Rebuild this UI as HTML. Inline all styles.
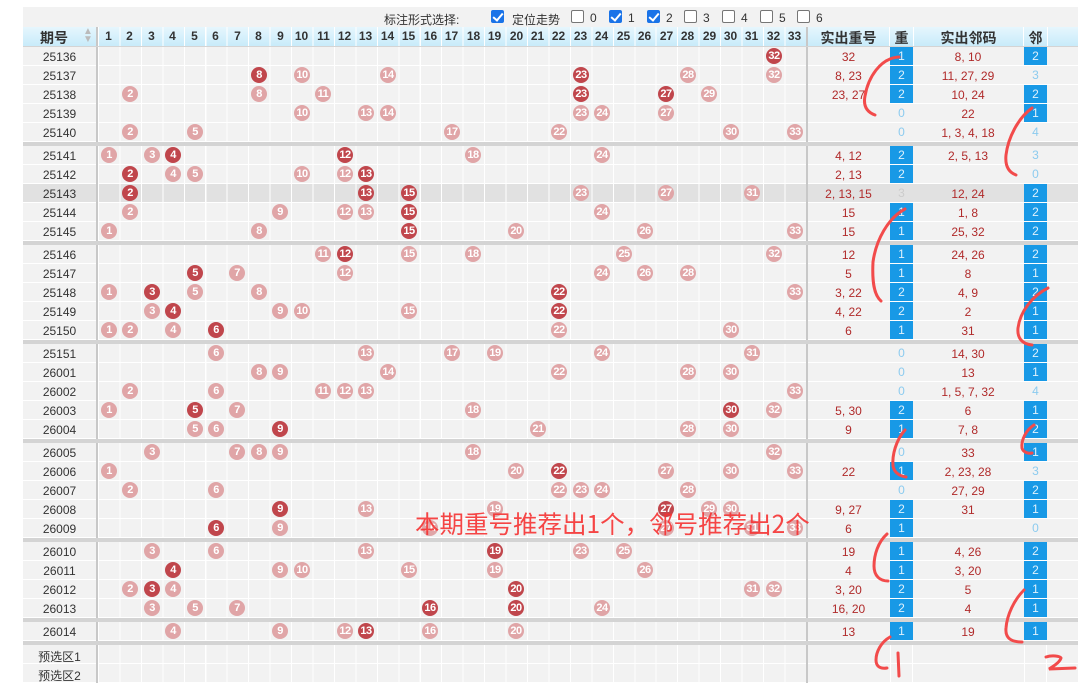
<!DOCTYPE html>
<html><head><meta charset="utf-8">
<style>
*{margin:0;padding:0;box-sizing:border-box}
body{width:1078px;height:679px;overflow:hidden;background:#fff;font-family:"Liberation Sans","Noto Sans CJK SC",sans-serif;position:relative}
#w{position:absolute;left:23px;top:7px;width:1055px;height:672px;background:#d4d4d4}
.bar{position:absolute;left:23px;top:7px;width:1055px;height:20px;background:#f2f2f2;font-size:12px;color:#333}
.bar span{position:absolute;top:4px}
.cb{position:absolute;top:3px;width:13px;height:13px;border:1px solid #767676;border-radius:2px;background:#fff}
.cb.k{background:#1a73e8;border-color:#1a73e8}
.cb.k:after{content:"";position:absolute;left:3px;top:0px;width:4px;height:8px;border:solid #fff;border-width:0 2px 2px 0;transform:rotate(40deg)}
.hd{position:absolute;top:27px;left:23px;width:1055px;height:19px;background:linear-gradient(#e6f6fd,#c8ebfa);font-weight:bold;color:#333}
.hd span{position:absolute;top:2px;text-align:center;font-size:12px}
.hd .big{font-size:14px;top:1px}
.r{position:absolute;left:23px;width:1055px;height:19px;background:#f2f2f2;border-bottom:1px solid #fff}
.r.g{background:#e1e1e1}
.r i{position:absolute;left:0;width:73px;top:3px;text-align:center;font-style:normal;font-size:12px;color:#333}
.num{position:absolute;left:75px;width:708px;top:0;height:18px;background:repeating-linear-gradient(90deg,#fff 0 1px,transparent 1px 21.45px)}
.lsep{position:absolute;left:73px;top:0;width:2px;height:19px;background:#c8c8c8}
.rsep{position:absolute;left:783px;top:0;width:2px;height:19px;background:#c8c8c8}
.r b{position:absolute;top:1px;width:16px;height:16px;border-radius:50%;background:#e0a5a7;color:#fff;font-size:11px;font-weight:bold;text-align:center;line-height:16px;letter-spacing:-0.5px}
.r b.d{background:#c0464c}
.r s{position:absolute;top:3px;text-decoration:none;text-align:center;font-size:12px;color:#b02a2a}
.r s.a{left:785px;width:81px}.r s.b{left:890px;width:110px}
.r u{position:absolute;top:0;height:18px;width:23px;text-decoration:none;text-align:center;font-size:12px;line-height:18px;color:#8ccbef}
.r u.c{left:867px}.r u.e{left:1001px}
.r u.on{background:#1899e6;color:#dff1fc}
.n1{left:78px}.n2{left:99px}.n3{left:121px}.n4{left:142px}.n5{left:164px}.n6{left:185px}.n7{left:206px}.n8{left:228px}.n9{left:249px}.n10{left:271px}.n11{left:292px}.n12{left:314px}.n13{left:335px}.n14{left:357px}.n15{left:378px}.n16{left:399px}.n17{left:421px}.n18{left:442px}.n19{left:464px}.n20{left:485px}.n21{left:507px}.n22{left:528px}.n23{left:550px}.n24{left:571px}.n25{left:593px}.n26{left:614px}.n27{left:635px}.n28{left:657px}.n29{left:678px}.n30{left:700px}.n31{left:721px}.n32{left:743px}.n33{left:764px}
.note{position:absolute;left:415px;top:506px;font-size:24.5px;color:rgba(245,50,50,0.9);white-space:nowrap;font-family:"Noto Sans CJK SC","WenQuanYi Zen Hei",sans-serif}
svg{position:absolute;left:0;top:0}
</style></head><body>
<div id="w"></div>
<div class="bar">
<span style="left:361px">标注形式选择:</span>
<div class="cb k" style="left:468px"></div><span style="left:489px">定位走势</span>
<div class="cb" style="left:548px"></div><span style="left:567px">0</span>
<div class="cb k" style="left:586px"></div><span style="left:605px">1</span>
<div class="cb k" style="left:624px"></div><span style="left:643px">2</span>
<div class="cb" style="left:661px"></div><span style="left:680px">3</span>
<div class="cb" style="left:699px"></div><span style="left:718px">4</span>
<div class="cb" style="left:737px"></div><span style="left:756px">5</span>
<div class="cb" style="left:774px"></div><span style="left:793px">6</span>
</div>
<div class="hd">
<span class="big" style="left:0;width:62px">期号</span><span style="left:60px;top:1px;color:#bbb;font-size:10px;line-height:8px">▲<br>▼</span>
<div style="position:absolute;left:73px;top:0;width:2px;height:19px;background:#c8c8c8"></div>
<div style="position:absolute;left:75px;width:708px;height:19px;background:repeating-linear-gradient(90deg,#fff 0 1px,transparent 1px 21.45px)"></div>
<span style="left:75px;width:21px">1</span><span style="left:96px;width:21px">2</span><span style="left:118px;width:21px">3</span><span style="left:139px;width:21px">4</span><span style="left:161px;width:21px">5</span><span style="left:182px;width:21px">6</span><span style="left:204px;width:21px">7</span><span style="left:225px;width:21px">8</span><span style="left:247px;width:21px">9</span><span style="left:268px;width:21px">10</span><span style="left:290px;width:21px">11</span><span style="left:311px;width:21px">12</span><span style="left:332px;width:21px">13</span><span style="left:354px;width:21px">14</span><span style="left:375px;width:21px">15</span><span style="left:397px;width:21px">16</span><span style="left:418px;width:21px">17</span><span style="left:440px;width:21px">18</span><span style="left:461px;width:21px">19</span><span style="left:483px;width:21px">20</span><span style="left:504px;width:21px">21</span><span style="left:525px;width:21px">22</span><span style="left:547px;width:21px">23</span><span style="left:568px;width:21px">24</span><span style="left:590px;width:21px">25</span><span style="left:611px;width:21px">26</span><span style="left:633px;width:21px">27</span><span style="left:654px;width:21px">28</span><span style="left:676px;width:21px">29</span><span style="left:697px;width:21px">30</span><span style="left:718px;width:21px">31</span><span style="left:740px;width:21px">32</span><span style="left:761px;width:21px">33</span>
<div style="position:absolute;left:783px;top:0;width:2px;height:19px;background:#c8c8c8"></div>
<span class="big" style="left:785px;width:81px">实出重号</span>
<span class="big" style="left:866px;width:24px;border-left:1px solid #fff;height:19px;top:0;padding-top:1px">重</span>
<span class="big" style="left:890px;width:110px;border-left:1px solid #fff;height:19px;top:0;padding-top:1px">实出邻码</span>
<span class="big" style="left:1000px;width:24px;border-left:1px solid #fff;height:19px;top:0;padding-top:1px">邻</span>
<span style="left:1024px;width:31px;border-left:1px solid #fff;height:19px;top:0"></span>
</div>

<div class="r" style="top:47px"><div class="lsep"></div><div class="num"></div><div class="rsep"></div><i>25136</i><b class="n32 d">32</b><s class="a">32</s><u class="c on">1</u><s class="b">8, 10</s><u class="e on">2</u></div>
<div class="r" style="top:66px"><div class="lsep"></div><div class="num"></div><div class="rsep"></div><i>25137</i><b class="n8 d">8</b><b class="n10">10</b><b class="n14">14</b><b class="n23 d">23</b><b class="n28">28</b><b class="n32">32</b><s class="a">8, 23</s><u class="c on">2</u><s class="b">11, 27, 29</s><u class="e">3</u></div>
<div class="r" style="top:85px"><div class="lsep"></div><div class="num"></div><div class="rsep"></div><i>25138</i><b class="n2">2</b><b class="n8">8</b><b class="n11">11</b><b class="n23 d">23</b><b class="n27 d">27</b><b class="n29">29</b><s class="a">23, 27</s><u class="c on">2</u><s class="b">10, 24</s><u class="e on">2</u></div>
<div class="r" style="top:104px"><div class="lsep"></div><div class="num"></div><div class="rsep"></div><i>25139</i><b class="n10">10</b><b class="n13">13</b><b class="n14">14</b><b class="n23">23</b><b class="n24">24</b><b class="n27">27</b><s class="a"></s><u class="c">0</u><s class="b">22</s><u class="e on">1</u></div>
<div class="r" style="top:123px"><div class="lsep"></div><div class="num"></div><div class="rsep"></div><i>25140</i><b class="n2">2</b><b class="n5">5</b><b class="n17">17</b><b class="n22">22</b><b class="n30">30</b><b class="n33">33</b><s class="a"></s><u class="c">0</u><s class="b">1, 3, 4, 18</s><u class="e">4</u></div>

<div class="r" style="top:146px"><div class="lsep"></div><div class="num"></div><div class="rsep"></div><i>25141</i><b class="n1">1</b><b class="n3">3</b><b class="n4 d">4</b><b class="n12 d">12</b><b class="n18">18</b><b class="n24">24</b><s class="a">4, 12</s><u class="c on">2</u><s class="b">2, 5, 13</s><u class="e">3</u></div>
<div class="r" style="top:165px"><div class="lsep"></div><div class="num"></div><div class="rsep"></div><i>25142</i><b class="n2 d">2</b><b class="n4">4</b><b class="n5">5</b><b class="n10">10</b><b class="n12">12</b><b class="n13 d">13</b><s class="a">2, 13</s><u class="c on">2</u><s class="b"></s><u class="e">0</u></div>
<div class="r g" style="top:184px"><div class="lsep"></div><div class="num"></div><div class="rsep"></div><i>25143</i><b class="n2 d">2</b><b class="n13 d">13</b><b class="n15 d">15</b><b class="n23">23</b><b class="n27">27</b><b class="n31">31</b><s class="a">2, 13, 15</s><u class="c" style="color:#ccc">3</u><s class="b">12, 24</s><u class="e on">2</u></div>
<div class="r" style="top:203px"><div class="lsep"></div><div class="num"></div><div class="rsep"></div><i>25144</i><b class="n2">2</b><b class="n9">9</b><b class="n12">12</b><b class="n13">13</b><b class="n15 d">15</b><b class="n24">24</b><s class="a">15</s><u class="c on">1</u><s class="b">1, 8</s><u class="e on">2</u></div>
<div class="r" style="top:222px"><div class="lsep"></div><div class="num"></div><div class="rsep"></div><i>25145</i><b class="n1">1</b><b class="n8">8</b><b class="n15 d">15</b><b class="n20">20</b><b class="n26">26</b><b class="n33">33</b><s class="a">15</s><u class="c on">1</u><s class="b">25, 32</s><u class="e on">2</u></div>

<div class="r" style="top:245px"><div class="lsep"></div><div class="num"></div><div class="rsep"></div><i>25146</i><b class="n11">11</b><b class="n12 d">12</b><b class="n15">15</b><b class="n18">18</b><b class="n25">25</b><b class="n32">32</b><s class="a">12</s><u class="c on">1</u><s class="b">24, 26</s><u class="e on">2</u></div>
<div class="r" style="top:264px"><div class="lsep"></div><div class="num"></div><div class="rsep"></div><i>25147</i><b class="n5 d">5</b><b class="n7">7</b><b class="n12">12</b><b class="n24">24</b><b class="n26">26</b><b class="n28">28</b><s class="a">5</s><u class="c on">1</u><s class="b">8</s><u class="e on">1</u></div>
<div class="r" style="top:283px"><div class="lsep"></div><div class="num"></div><div class="rsep"></div><i>25148</i><b class="n1">1</b><b class="n3 d">3</b><b class="n5">5</b><b class="n8">8</b><b class="n22 d">22</b><b class="n33">33</b><s class="a">3, 22</s><u class="c on">2</u><s class="b">4, 9</s><u class="e on">2</u></div>
<div class="r" style="top:302px"><div class="lsep"></div><div class="num"></div><div class="rsep"></div><i>25149</i><b class="n3">3</b><b class="n4 d">4</b><b class="n9">9</b><b class="n10">10</b><b class="n15">15</b><b class="n22 d">22</b><s class="a">4, 22</s><u class="c on">2</u><s class="b">2</s><u class="e on">1</u></div>
<div class="r" style="top:321px"><div class="lsep"></div><div class="num"></div><div class="rsep"></div><i>25150</i><b class="n1">1</b><b class="n2">2</b><b class="n4">4</b><b class="n6 d">6</b><b class="n22">22</b><b class="n30">30</b><s class="a">6</s><u class="c on">1</u><s class="b">31</s><u class="e on">1</u></div>

<div class="r" style="top:344px"><div class="lsep"></div><div class="num"></div><div class="rsep"></div><i>25151</i><b class="n6">6</b><b class="n13">13</b><b class="n17">17</b><b class="n19">19</b><b class="n24">24</b><b class="n31">31</b><s class="a"></s><u class="c">0</u><s class="b">14, 30</s><u class="e on">2</u></div>
<div class="r" style="top:363px"><div class="lsep"></div><div class="num"></div><div class="rsep"></div><i>26001</i><b class="n8">8</b><b class="n9">9</b><b class="n14">14</b><b class="n22">22</b><b class="n28">28</b><b class="n30">30</b><s class="a"></s><u class="c">0</u><s class="b">13</s><u class="e on">1</u></div>
<div class="r" style="top:382px"><div class="lsep"></div><div class="num"></div><div class="rsep"></div><i>26002</i><b class="n2">2</b><b class="n6">6</b><b class="n11">11</b><b class="n12">12</b><b class="n13">13</b><b class="n33">33</b><s class="a"></s><u class="c">0</u><s class="b">1, 5, 7, 32</s><u class="e">4</u></div>
<div class="r" style="top:401px"><div class="lsep"></div><div class="num"></div><div class="rsep"></div><i>26003</i><b class="n1">1</b><b class="n5 d">5</b><b class="n7">7</b><b class="n18">18</b><b class="n30 d">30</b><b class="n32">32</b><s class="a">5, 30</s><u class="c on">2</u><s class="b">6</s><u class="e on">1</u></div>
<div class="r" style="top:420px"><div class="lsep"></div><div class="num"></div><div class="rsep"></div><i>26004</i><b class="n5">5</b><b class="n6">6</b><b class="n9 d">9</b><b class="n21">21</b><b class="n28">28</b><b class="n30">30</b><s class="a">9</s><u class="c on">1</u><s class="b">7, 8</s><u class="e on">2</u></div>

<div class="r" style="top:443px"><div class="lsep"></div><div class="num"></div><div class="rsep"></div><i>26005</i><b class="n3">3</b><b class="n7">7</b><b class="n8">8</b><b class="n9">9</b><b class="n18">18</b><b class="n32">32</b><s class="a"></s><u class="c">0</u><s class="b">33</s><u class="e on">1</u></div>
<div class="r" style="top:462px"><div class="lsep"></div><div class="num"></div><div class="rsep"></div><i>26006</i><b class="n1">1</b><b class="n20">20</b><b class="n22 d">22</b><b class="n27">27</b><b class="n30">30</b><b class="n33">33</b><s class="a">22</s><u class="c on">1</u><s class="b">2, 23, 28</s><u class="e">3</u></div>
<div class="r" style="top:481px"><div class="lsep"></div><div class="num"></div><div class="rsep"></div><i>26007</i><b class="n2">2</b><b class="n6">6</b><b class="n22">22</b><b class="n23">23</b><b class="n24">24</b><b class="n28">28</b><s class="a"></s><u class="c">0</u><s class="b">27, 29</s><u class="e on">2</u></div>
<div class="r" style="top:500px"><div class="lsep"></div><div class="num"></div><div class="rsep"></div><i>26008</i><b class="n9 d">9</b><b class="n13">13</b><b class="n19">19</b><b class="n27 d">27</b><b class="n29">29</b><b class="n30">30</b><s class="a">9, 27</s><u class="c on">2</u><s class="b">31</s><u class="e on">1</u></div>
<div class="r" style="top:519px"><div class="lsep"></div><div class="num"></div><div class="rsep"></div><i>26009</i><b class="n6 d">6</b><b class="n9">9</b><b class="n16">16</b><b class="n27">27</b><b class="n31">31</b><b class="n33">33</b><s class="a">6</s><u class="c on">1</u><s class="b"></s><u class="e">0</u></div>

<div class="r" style="top:542px"><div class="lsep"></div><div class="num"></div><div class="rsep"></div><i>26010</i><b class="n3">3</b><b class="n6">6</b><b class="n13">13</b><b class="n19 d">19</b><b class="n23">23</b><b class="n25">25</b><s class="a">19</s><u class="c on">1</u><s class="b">4, 26</s><u class="e on">2</u></div>
<div class="r" style="top:561px"><div class="lsep"></div><div class="num"></div><div class="rsep"></div><i>26011</i><b class="n4 d">4</b><b class="n9">9</b><b class="n10">10</b><b class="n15">15</b><b class="n19">19</b><b class="n26">26</b><s class="a">4</s><u class="c on">1</u><s class="b">3, 20</s><u class="e on">2</u></div>
<div class="r" style="top:580px"><div class="lsep"></div><div class="num"></div><div class="rsep"></div><i>26012</i><b class="n2">2</b><b class="n3 d">3</b><b class="n4">4</b><b class="n20 d">20</b><b class="n31">31</b><b class="n32">32</b><s class="a">3, 20</s><u class="c on">2</u><s class="b">5</s><u class="e on">1</u></div>
<div class="r" style="top:599px"><div class="lsep"></div><div class="num"></div><div class="rsep"></div><i>26013</i><b class="n3">3</b><b class="n5">5</b><b class="n7">7</b><b class="n16 d">16</b><b class="n20 d">20</b><b class="n24">24</b><s class="a">16, 20</s><u class="c on">2</u><s class="b">4</s><u class="e on">1</u></div>

<div class="r" style="top:622px"><div class="lsep"></div><div class="num"></div><div class="rsep"></div><i>26014</i><b class="n4">4</b><b class="n9">9</b><b class="n12">12</b><b class="n13 d">13</b><b class="n16">16</b><b class="n20">20</b><s class="a">13</s><u class="c on">1</u><s class="b">19</s><u class="e on">1</u></div>

<div class="r" style="top:645px"><div class="lsep"></div><div class="num"></div><div class="rsep"></div><i>预选区1</i><u class="c" style="border-left:1px solid #fff;border-right:1px solid #fff"></u><u class="e" style="border-left:1px solid #fff;border-right:1px solid #fff"></u></div>
<div class="r" style="top:664px"><div class="lsep"></div><div class="num"></div><div class="rsep"></div><i>预选区2</i><u class="c" style="border-left:1px solid #fff;border-right:1px solid #fff"></u><u class="e" style="border-left:1px solid #fff;border-right:1px solid #fff"></u></div>

<div class="note">本期重号推荐出1个，邻号推荐出2个</div>

<svg width="1078" height="679" fill="none" stroke="#f24b4b" stroke-width="3" stroke-linecap="round">
<path d="M899 57 C880 58 868 78 865 96 C863 106 867 112 875 115"/>
<path d="M1032 108 C1018 118 1008 138 1006 155 C1005 165 1008 172 1016 175"/>
<path d="M905 209 C888 218 876 240 873 262 C872 282 874 295 881 301"/>
<path d="M1048 288 C1032 296 1020 312 1018 328 C1017 338 1022 344 1032 345"/>
<path d="M905 430 C896 440 892 455 893 466 C894 472 899 476 906 477"/>
<path d="M1034 425 C1026 430 1021 440 1022 448 C1023 452 1028 454 1032 453"/>
<path d="M887 534 C878 542 874 555 874 566 C874 576 880 581 888 581"/>
<path d="M1024 590 C1014 600 1007 615 1006 628 C1005 638 1011 642 1022 642"/>
<path d="M890 637 C881 642 876 652 876 660 C876 667 881 669 887 668"/>
<path d="M898 653 L899 676"/>
<path d="M1046 657 C1052 655 1060 656 1061 658 C1060 662 1054 666 1049 669 L1075 668"/>
</svg>
</body></html>
